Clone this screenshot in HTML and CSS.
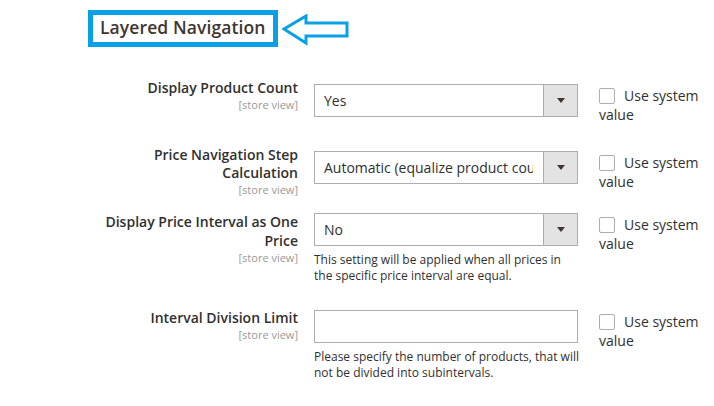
FILE: index.html
```html
<!DOCTYPE html>
<html>
<head>
<meta charset="utf-8">
<link rel="stylesheet" href="styles.css">
</head>
<body>
<div class="page">
  <div class="header">
    <h2 class="title">Layered Navigation</h2>
    <svg class="arrow" width="70" height="32" viewBox="0 0 70 32">
      <path d="M2 15 L24 2 L24 9 L65 9 L65 22 L24 22 L24 29 Z" fill="none" stroke="#0aa0e6" stroke-width="3" stroke-linejoin="miter"/>
    </svg>
  </div>

  <div class="row row-1">
    <div class="label"><span class="name">Display Product Count</span><span class="scope">[store view]</span></div>
    <div class="control">
      <div class="select"><span class="value">Yes</span><span class="btn"><span class="caret"></span></span></div>
    </div>
    <div class="inherit"><span class="cb"></span>Use system value</div>
  </div>

  <div class="row row-2">
    <div class="label"><span class="name">Price Navigation Step Calculation</span><span class="scope">[store view]</span></div>
    <div class="control">
      <div class="select"><span class="value">Automatic (equalize product counts)</span><span class="btn"><span class="caret"></span></span></div>
    </div>
    <div class="inherit"><span class="cb"></span>Use system value</div>
  </div>

  <div class="row row-3">
    <div class="label"><span class="name">Display Price Interval as One Price</span><span class="scope">[store view]</span></div>
    <div class="control">
      <div class="select"><span class="value">No</span><span class="btn"><span class="caret"></span></span></div>
      <p class="note">This setting will be applied when all prices in the specific price interval are equal.</p>
    </div>
    <div class="inherit"><span class="cb"></span>Use system value</div>
  </div>

  <div class="row row-4">
    <div class="label"><span class="name">Interval Division Limit</span><span class="scope">[store view]</span></div>
    <div class="control">
      <div class="input"></div>
      <p class="note note-wide">Please specify the number of products, that will not be divided into subintervals.</p>
    </div>
    <div class="inherit"><span class="cb"></span>Use system value</div>
  </div>
</div>
</body>
</html>
```
FILE: styles.css
```css
* { box-sizing: border-box; }
html, body { margin: 0; padding: 0; background: #fff; }
body {
  font-family: "Open Sans", "DejaVu Sans", sans-serif;
  color: #303030;
  width: 714px;
  height: 406px;
  overflow: hidden;
}
.page { padding-top: 10px; }
.header {
  display: flex;
  align-items: center;
  margin-left: 88px;
}
.title {
  margin: 0;
  border: 5px solid #0aa0e6;
  padding: 0 7px;
  height: 37px;
  line-height: 25px;
  font-size: 17.5px;
  font-weight: 600;
  color: #41362f;
  letter-spacing: 0.1px;
}
.arrow { margin-left: 4px; margin-top: 3px; }

.row {
  display: flex;
  align-items: flex-start;
}
.row-1 { margin-top: 37px; }
.row-2 { margin-top: 27px; }
.row-3 { margin-top: 16px; }
.row-4 { margin-top: 26px; }

.label {
  width: 200px;
  margin-left: 98px;
  margin-top: -5px;
  text-align: right;
  display: flex;
  flex-direction: column;
}
.row-3 .label, .row-4 .label { margin-top: -1px; }
.name {
  font-size: 14px;
  font-weight: 600;
  line-height: 18px;
}
.row-3 .name { line-height: 19px; }
.scope {
  font-size: 11px;
  line-height: 15px;
  color: #999;
}
.control {
  width: 264px;
  margin-left: 16px;
}
.select {
  display: flex;
  height: 33px;
  border: 1px solid #adadad;
  background: #fff;
}
.value {
  flex: 1;
  padding-left: 9px;
  margin-right: 10px;
  font-size: 14px;
  line-height: 31px;
  white-space: nowrap;
  overflow: hidden;
}
.btn {
  width: 34px;
  background: #e3e3e3;
  border-left: 1px solid #adadad;
  display: flex;
  align-items: center;
  justify-content: center;
}
.caret {
  width: 0;
  height: 0;
  border-left: 4px solid transparent;
  border-right: 4px solid transparent;
  border-top: 5px solid #41362f;
}
.input {
  height: 33px;
  border: 1px solid #adadad;
  background: #fff;
}
.note {
  margin: 6px 0 0;
  font-size: 12px;
  line-height: 16px;
  color: #303030;
}
.note-wide { margin-right: -8px; }
.inherit {
  width: 110px;
  margin-left: 21px;
  margin-top: 2px;
  font-size: 14px;
  line-height: 19px;
}
.cb {
  display: inline-block;
  width: 16px;
  height: 16px;
  border: 1px solid #adadad;
  border-radius: 2px;
  vertical-align: -3px;
  margin-right: 9px;
  background: #fff;
}
```
